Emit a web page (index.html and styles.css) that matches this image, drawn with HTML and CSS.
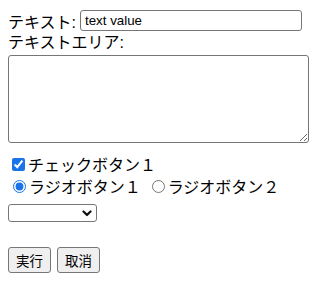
FILE: index.html
```html
<!DOCTYPE html>
<html lang="ja">
<head>
  <meta charset="UTF-8" />
  <meta name="viewport" content="width=device-width, initial-scale=1.0"/>
  <title>フォーム</title>
  <link rel="stylesheet" href="styles.css">
</head>
<body>
  <form class="form">
    <div class="row text-row">
      <label for="text1">テキスト:</label>
      <input type="text" id="text1" class="text-input" value="text value" />
    </div>

    <label for="area1" class="area-label">テキストエリア:</label>
    <textarea id="area1" class="text-area"></textarea>

    <div class="row check-row">
      <input type="checkbox" id="check1" class="check" checked />
      <label for="check1">チェックボタン１</label>
    </div>

    <div class="row radio-row">
      <input type="radio" id="radio1" name="radio" class="radio" checked />
      <label for="radio1">ラジオボタン１</label>
      <input type="radio" id="radio2" name="radio" class="radio radio-second" />
      <label for="radio2">ラジオボタン２</label>
    </div>

    <div class="select-wrap">
      <select class="select">
        <option></option>
      </select>
      <svg class="chevron" width="10" height="7" viewBox="0 0 10 7">
        <path d="M1.5 1.5 L5 5 L8.5 1.5" fill="none" stroke="#111" stroke-width="2.2" stroke-linecap="round" stroke-linejoin="round"/>
      </svg>
    </div>

    <div class="buttons">
      <button type="button" class="btn">実行</button>
      <button type="button" class="btn">取消</button>
    </div>
  </form>
</body>
</html>
```

FILE: styles.css
```css
* { box-sizing: border-box; }
body {
  margin: 8px;
  font-family: "Liberation Sans", "Noto Sans CJK JP", sans-serif;
  font-size: 16px;
  color: #000;
  background: #fff;
}
.row {
  display: flex;
  align-items: center;
}
.text-row {
  height: 25px;
}
.text-input {
  margin-left: 4px;
  width: 222px;
  height: 21px;
  padding: 1px 4px;
  border: 1px solid #767676;
  border-radius: 3px;
  font-family: "Liberation Sans", sans-serif;
  font-size: 13.33px;
  color: #000;
}
.area-label {
  display: block;
  height: 20px;
  line-height: 20px;
}
.text-area {
  display: block;
  margin: 2px 0 0;
  width: 301px;
  height: 88px;
  border: 1px solid #767676;
  border-radius: 3px;
  resize: both;
}
.check-row {
  margin-top: 10px;
  height: 22px;
}
.radio-row {
  height: 22px;
}
.check {
  margin: 0 3px 0 4px;
  width: 13px;
  height: 13px;
  accent-color: #1a73e8;
}
.radio {
  margin: 0 3px 0 5px;
  width: 13px;
  height: 13px;
  accent-color: #1a73e8;
}
.radio-second {
  margin-left: 11px;
}
.select-wrap {
  position: relative;
  margin-top: 7px;
  width: 89px;
  height: 18px;
}
.select {
  appearance: none;
  display: block;
  width: 89px;
  height: 18px;
  border: 1px solid #767676;
  border-radius: 3px;
  background: #fff;
  font-size: 13px;
}
.chevron {
  position: absolute;
  right: 5px;
  top: 6px;
  pointer-events: none;
}
.buttons {
  display: flex;
  gap: 6px;
  margin-top: 25px;
}
.btn {
  width: 43px;
  height: 26px;
  padding: 0;
  border: 1px solid #767676;
  border-radius: 3px;
  background: #efefef;
  font-family: "Noto Sans CJK JP", sans-serif;
  font-size: 13.5px;
  color: #000;
}
```
